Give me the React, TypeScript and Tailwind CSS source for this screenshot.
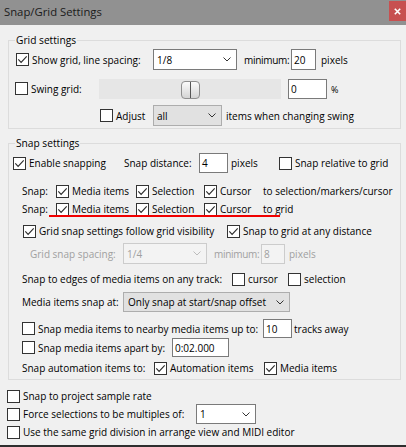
import React from "react";

const Check = ({ checked }: { checked?: boolean }) => (
  <span className="flex h-[13px] w-[13px] shrink-0 items-center justify-center border border-[#333333] bg-white">
    {checked && (
      <svg width="11" height="11" viewBox="0 0 11 11">
        <path d="M1.3 5.4 L4.1 8.3 L9.7 2.4" fill="none" stroke="#2b2b2b" strokeWidth="1.15" />
      </svg>
    )}
  </span>
);

const CheckLabel = ({
  checked,
  label,
  w = "",
}: {
  checked?: boolean;
  label: string;
  w?: string;
}) => (
  <span className={`flex shrink-0 items-center ${w}`}>
    <Check checked={checked} />
    <span className="ml-[3px] whitespace-nowrap">{label}</span>
  </span>
);

const Chevron = ({ color = "#333333" }: { color?: string }) => (
  <svg width="8" height="5" viewBox="0 0 8 5">
    <path d="M0.5 0.5 L4 4 L7.5 0.5" fill="none" stroke={color} strokeWidth="1" />
  </svg>
);

const Dropdown = ({
  text,
  cls,
  chevron = "#333333",
}: {
  text: string;
  cls: string;
  chevron?: string;
}) => (
  <span className={`flex shrink-0 items-center border ${cls}`}>
    <span className="flex-1 whitespace-nowrap">{text}</span>
    <span className="pr-[5px]">
      <Chevron color={chevron} />
    </span>
  </span>
);

const Input = ({ text, cls }: { text: string; cls: string }) => (
  <span className={`flex shrink-0 items-center whitespace-nowrap border pl-[2px] ${cls}`}>{text}</span>
);

export default function App() {
  return (
    <div className="relative flex h-[447px] w-[406px] flex-col overflow-hidden bg-[#f0f0f0] font-['Open_Sans',sans-serif] text-[10px] leading-[14px] text-black">
      {/* Title bar */}
      <div className="flex h-[25px] shrink-0 items-start bg-[#919191]">
        <span className="pl-[4px] pt-[4px] text-[11.3px] leading-[16px] text-[#1a1a1a]">Snap/Grid Settings</span>
        <span className="ml-auto mt-[1px] flex h-[20px] w-[17px] items-center justify-center bg-[#c75050]">
          <svg width="7" height="7" viewBox="0 0 7 7">
            <path d="M0.8 0.8 L6.2 6.2 M6.2 0.8 L0.8 6.2" stroke="#ffffff" strokeWidth="1.6" />
          </svg>
        </span>
      </div>

      {/* Grid settings */}
      <div className="relative ml-[8px] mt-[15px] h-[89px] w-[393px] shrink-0 border border-[#dcdcdc]">
        <span className="absolute left-[6px] top-[-8px] bg-[#f0f0f0] px-[1px] text-[10.2px] leading-[14px]">Grid settings</span>

        <div className="mt-[8px] flex h-[21px] items-center pl-[7px]">
          <CheckLabel checked label="Show grid, line spacing:" w="w-[137px]" />
          <Dropdown text="1/8" cls="h-[21px] w-[84px] border-[#7a7a7a] bg-white pl-[3px]" />
          <span className="ml-[7px] w-[47px] shrink-0 whitespace-nowrap tracking-[-0.3px]">minimum:</span>
          <Input text="20" cls="h-[21px] w-[25px] border-[#7a7a7a] bg-white" />
          <span className="ml-[5px]">pixels</span>
        </div>

        <div className="mt-[8px] flex h-[21px] items-center pl-[6px]">
          <CheckLabel label="Swing grid:" w="w-[84px]" />
          <span className="flex h-[20px] w-[182px] shrink-0 items-end bg-[#e6e6e6] pl-[82px]">
            <span className="relative flex h-[18px] w-[19px] justify-center rounded-[4px] border border-[#8f8f8f] bg-gradient-to-b from-[#fbfbfb] to-[#d4d4d4]">
              <span className="h-full w-[1px] bg-[#555555]" />
            </span>
          </span>
          <Input text="0" cls="ml-[7px] h-[20px] w-[39px] border-[#7a7a7a] bg-white" />
          <span className="ml-[4px] mt-[3px] text-[9px]">%</span>
        </div>

        <div className="mt-[6px] flex h-[21px] items-center pl-[91px]">
          <CheckLabel label="Adjust" w="w-[53px]" />
          <Dropdown text="all" cls="h-[21px] w-[69px] border-[#adadad] bg-[#e1e1e1] pl-[3px]" />
          <span className="ml-[4px] whitespace-nowrap">items when changing swing</span>
        </div>
      </div>

      {/* Snap settings */}
      <div className="relative ml-[8px] mt-[14px] h-[237px] w-[393px] shrink-0 border border-[#dcdcdc]">
        <span className="absolute left-[6px] top-[-8px] bg-[#f0f0f0] px-[1px] text-[10.2px] leading-[14px]">Snap settings</span>

        <div className="mt-[9px] flex h-[20px] items-center pl-[4px]">
          <CheckLabel checked label="Enable snapping" w="w-[111px]" />
          <span className="w-[75px] shrink-0 whitespace-nowrap">Snap distance:</span>
          <Input text="4" cls="h-[20px] w-[29px] border-[#7a7a7a] bg-white" />
          <span className="w-[51px] shrink-0 pl-[3px]">pixels</span>
          <CheckLabel label="Snap relative to grid" />
        </div>

        <div className="mt-[10px] flex h-[16px] items-center pl-[13px]">
          <span className="w-[34px] shrink-0">Snap:</span>
          <CheckLabel checked label="Media items" w="w-[80px]" />
          <CheckLabel checked label="Selection" w="w-[68px]" />
          <CheckLabel checked label="Cursor" w="w-[59px]" />
          <span className="whitespace-nowrap">to selection/markers/cursor</span>
        </div>

        <div className="mt-[2px] flex h-[16px] items-center pl-[13px]">
          <span className="w-[34px] shrink-0">Snap:</span>
          <CheckLabel checked label="Media items" w="w-[80px]" />
          <CheckLabel checked label="Selection" w="w-[68px]" />
          <CheckLabel checked label="Cursor" w="w-[59px]" />
          <span className="whitespace-nowrap">to grid</span>
        </div>

        <div className="mt-[6px] flex h-[16px] items-center pl-[14px]">
          <CheckLabel checked label="Grid snap settings follow grid visibility" w="w-[204px]" />
          <CheckLabel checked label="Snap to grid at any distance" />
        </div>

        <div className="mt-[4px] flex h-[21px] items-center pl-[21px] text-[#a0a0a0]">
          <span className="w-[93px] shrink-0 whitespace-nowrap">Grid snap spacing:</span>
          <Dropdown text="1/4" chevron="#bcbcbc" cls="h-[21px] w-[84px] border-[#cccccc] bg-[#f3f3f3] pl-[3px]" />
          <span className="ml-[7px] w-[47px] shrink-0 whitespace-nowrap tracking-[-0.3px]">minimum:</span>
          <Input text="8" cls="h-[20px] w-[24px] border-[#cccccc] bg-[#f3f3f3]" />
          <span className="ml-[4px]">pixels</span>
        </div>

        <div className="mt-[7px] flex h-[16px] items-center pl-[13px]">
          <span className="w-[210px] shrink-0 whitespace-nowrap">Snap to edges of media items on any track:</span>
          <CheckLabel label="cursor" w="w-[56px]" />
          <CheckLabel label="selection" />
        </div>

        <div className="mt-[5px] flex h-[20px] items-center pl-[13px]">
          <span className="w-[101px] shrink-0 whitespace-nowrap">Media items snap at:</span>
          <Dropdown text="Only snap at start/snap offset" cls="h-[20px] w-[167px] border-[#adadad] bg-[#e1e1e1] pl-[4px]" />
        </div>

        <div className="mt-[7px] flex h-[19px] items-center pl-[13px]">
          <CheckLabel label="Snap media items to nearby media items up to:" w="w-[241px]" />
          <Input text="10" cls="h-[19px] w-[29px] border-[#7a7a7a] bg-white" />
          <span className="pl-[2px] whitespace-nowrap">tracks away</span>
        </div>

        <div className="flex h-[19px] items-center pl-[13px]">
          <CheckLabel label="Snap media items apart by:" w="w-[150px]" />
          <Input text="0:02.000" cls="h-[19px] w-[57px] border-[#7a7a7a] bg-white" />
        </div>

        <div className="mt-[3px] flex h-[16px] items-center pl-[13px]">
          <span className="w-[132px] shrink-0 whitespace-nowrap">Snap automation items to:</span>
          <CheckLabel checked label="Automation items" w="w-[110px]" />
          <CheckLabel checked label="Media items" />
        </div>
      </div>

      {/* Bottom options */}
      <div className="mt-[8px] flex h-[16px] shrink-0 items-center pl-[7px]">
        <CheckLabel label="Snap to project sample rate" />
      </div>
      <div className="flex h-[20px] shrink-0 items-center pl-[7px]">
        <CheckLabel label="Force selections to be multiples of:" w="w-[189px]" />
        <Dropdown text="1" cls="h-[20px] w-[60px] border-[#7a7a7a] bg-white pl-[3px]" />
      </div>
      <div className="flex h-[16px] shrink-0 items-center pl-[7px]">
        <CheckLabel label="Use the same grid division in arrange view and MIDI editor" />
      </div>

      <div className="mt-auto h-[2px] shrink-0 bg-[#2e2e2e]" />

      {/* red annotation underline */}
      <div className="absolute left-[49px] top-[215px] h-[2px] w-[231px] bg-[#f00000]" />
    </div>
  );
}
